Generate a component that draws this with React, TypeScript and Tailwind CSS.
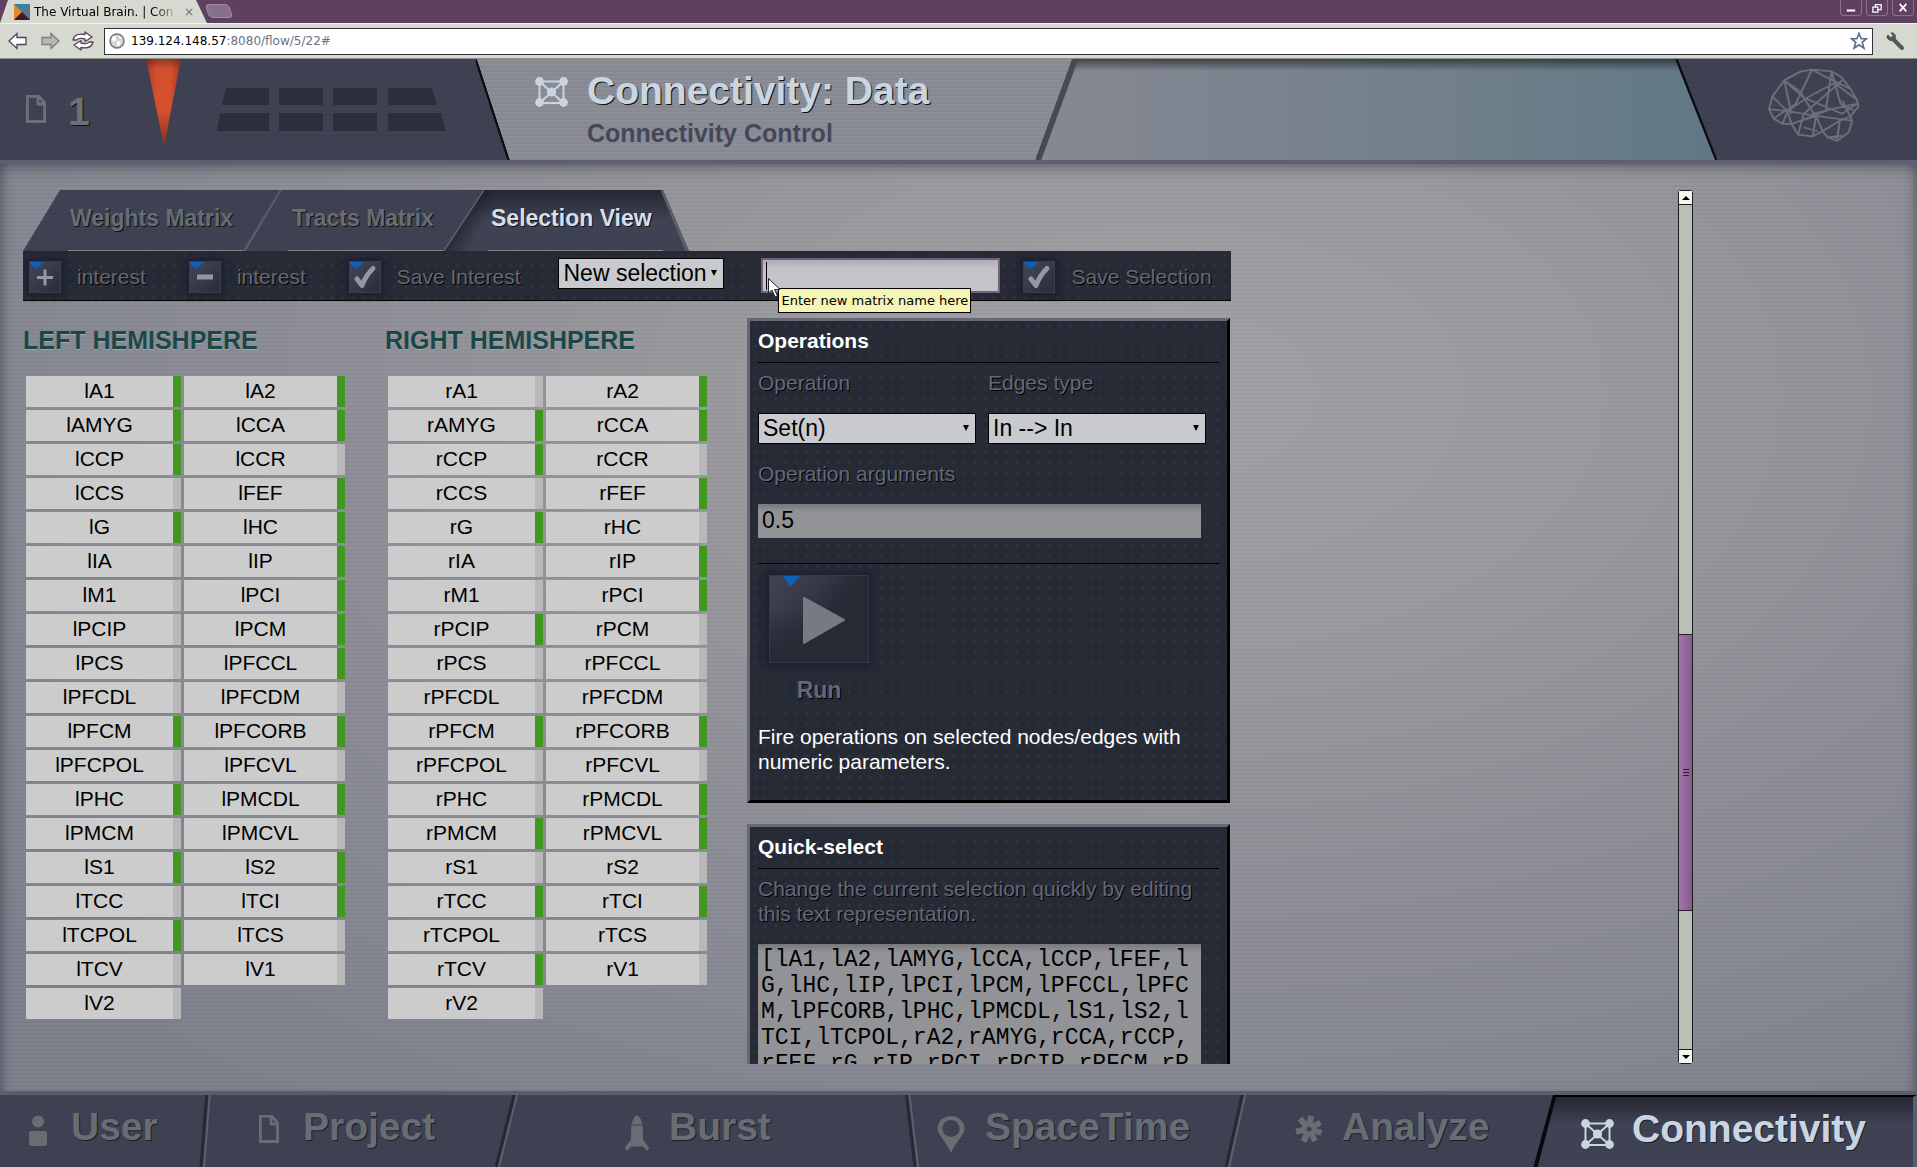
import React from "react";

const SANS = "font-['Liberation_Sans',Arial,sans-serif]";
const STRIPES =
  "bg-[repeating-linear-gradient(0deg,rgba(0,0,0,0.035)_0px,rgba(0,0,0,0.035)_2px,transparent_2px,transparent_4px)]";
const DOTS =
  "bg-[#262a35] bg-[radial-gradient(circle_at_5px_5px,#2f3440_0px,#2f3440_1px,transparent_2px),radial-gradient(circle_at_15px_5px,#2f3440_0px,#2f3440_1px,transparent_2px),radial-gradient(circle_at_5px_15px,#2f3440_0px,#2f3440_1px,transparent_2px),radial-gradient(circle_at_15px_15px,#2f3440_0px,#2f3440_1px,transparent_2px)] bg-[size:21px_21px]";

function Network({ className }: { className: string }) {
  return (
    <svg viewBox="0 0 34 30" className={className} fill="currentColor" stroke="currentColor" aria-hidden="true">
      <path d="M5 4.500H29V26H5ZM5 4.500L29 26M29 4.500L5 26" fill="none" strokeWidth="2" />
      <g stroke="none">
        <circle cx="5" cy="4.500" r="4.400" />
        <circle cx="29" cy="4.500" r="4.400" />
        <circle cx="5" cy="25.500" r="4.400" />
        <circle cx="29" cy="25.500" r="4.400" />
        <circle cx="17" cy="15" r="4.600" />
      </g>
    </svg>
  );
}

function PageIcon({ className }: { className: string }) {
  return (
    <svg viewBox="0 0 20 28" className={className} fill="none" stroke="currentColor" strokeWidth="2.800" aria-hidden="true">
      <path d="M1.400 1.400H13L18.600 8V26.500H1.400ZM12 2V9H18.500" />
    </svg>
  );
}

function UserIcon() {
  return (
    <svg viewBox="0 0 20 32" className="h-8 w-5" fill="currentColor" aria-hidden="true">
      <ellipse cx="10" cy="6.500" rx="6" ry="6" />
      <rect x="1" y="16" width="18" height="15" rx="2.500" />
    </svg>
  );
}

function RocketIcon() {
  return (
    <svg viewBox="0 0 24 36" className="h-9 w-6" fill="currentColor" aria-hidden="true">
      <path d="M12 0C9 2 7 6 6.600 9.500H17.400C17 6 15 2 12 0Z" />
      <path d="M6.200 10.500H17.800L18.200 25L23 31C24.500 34 23 36 21.500 35.500L18 31.500H6L2.500 35.500C1 36 -0.500 34 1 31L5.800 25Z" />
    </svg>
  );
}

function PinIcon() {
  return (
    <svg viewBox="0 0 28 38" className="h-[38px] w-7" fill="currentColor" fillRule="evenodd" aria-hidden="true">
      <path d="M14 1C6.500 1 0.500 6.500 0.500 13.500C0.500 20 9 26 14 38C19 26 27.500 20 27.500 13.500C27.500 6.500 21.500 1 14 1ZM14 5A8.700 8.500 0 1 1 14 22A8.700 8.500 0 1 1 14 5Z" />
    </svg>
  );
}

function CogIcon() {
  return (
    <svg viewBox="0 0 28 28" className="h-7 w-7" aria-hidden="true">
      <g stroke="currentColor" strokeWidth="6">
        <path d="M14 14L16 1M14 14L25.500 7.500M14 14L26.500 18M14 14L20 26M14 14L8.500 26.500M14 14L1 16.500M14 14L5 3.500" />
      </g>
      <circle cx="14" cy="14" r="7.500" fill="currentColor" />
      <circle cx="14" cy="14" r="2.500" fill="#3f4253" />
    </svg>
  );
}

function Brain() {
  return (
    <svg
      viewBox="1195 200 240 230"
      preserveAspectRatio="none"
      className="h-[77px] w-[98px]"
      fill="none"
      stroke="#6b7078"
      strokeWidth="5"
      strokeLinejoin="round"
      aria-hidden="true"
    >
      <path d="M1205 326L1213 288L1242 240L1281 214L1310 208L1358 213L1382 230L1404 265L1420 298L1424 318L1404 348L1408 362L1400 395L1371 421L1348 410L1336 392L1312 407L1276 402L1260 370L1238 370L1216 354Z" />
      <path d="M1205 326L1250 332L1320 346L1408 360M1213 288L1250 332L1238 370M1242 240L1290 292L1384 340L1420 310M1281 214L1242 240L1280 272L1320 350M1310 208L1270 310L1216 354M1310 208L1354 236L1404 265M1358 213L1344 330L1310 340M1358 213L1380 310L1412 330M1358 213L1366 248L1420 298M1366 248L1300 290L1250 332L1260 370M1384 240L1290 340L1276 402M1260 370L1320 346L1336 392M1320 346L1312 407M1336 392L1378 360L1404 348M1384 300L1404 348M1290 380L1325 392M1378 360L1371 421M1348 410L1385 405M1420 310L1360 325L1260 370M1242 240L1260 340" />
    </svg>
  );
}

function Edge({ d, w, className, stroke, width = 3 }: { d: string; w: string; className: string; stroke: string; width?: number }) {
  return (
    <svg viewBox={w} preserveAspectRatio="none" className={className} fill="none" aria-hidden="true">
      <path d={d} stroke={stroke} strokeWidth={width} />
    </svg>
  );
}

function BrowserChrome() {
  return (
    <div className="shrink-0 font-['DejaVu_Sans',sans-serif] text-[12px] text-black">
      <div className="flex h-[23px] items-start bg-[#5f4061]">
        <div className="flex h-[23px] w-[207px] items-center bg-[#d6d9cf] pl-3.5 [clip-path:polygon(8px_0,196px_0,100%_100%,0_100%)]">
          <svg viewBox="0 0 16 16" className="h-4 w-4" aria-hidden="true">
            <rect width="16" height="16" fill="#5c7684" />
            <path d="M0 0L8 8L0 16Z" fill="#e8842a" />
            <path d="M2 0H14L8 8Z" fill="#2d86a5" />
            <path d="M0 16L8 8L16 16Z" fill="#43192f" />
          </svg>
          <span className="ml-1 w-[144px] overflow-hidden whitespace-nowrap bg-linear-to-r from-black from-80% to-[#d6d9cf] bg-clip-text text-transparent">
            The Virtual Brain. | Con
          </span>
          <button className="ml-1.5 leading-none text-gray-500" aria-label="Close tab">×</button>
        </div>
        <div className="mt-1 h-3.5 w-6 rounded-sm border border-[#a58ba6] bg-[#87708a] [transform:skewX(18deg)]" />
        <div className="ml-auto flex gap-1 pr-[3px]">
          {["min", "max", "close"].map((k) => (
            <button
              key={k}
              aria-label={k}
              className="flex h-4 w-[22px] items-center justify-center rounded-b-sm border border-t-0 border-[#8d708f] text-white"
            >
              <svg viewBox="0 0 12 12" className="h-2.5 w-2.5" fill="none" stroke="currentColor" strokeWidth="1.500" aria-hidden="true">
                {k === "min" && <path d="M1 9H11" strokeWidth="2.500" />}
                {k === "max" && <path d="M1 5H7V11H1ZM4 5V2H11V8H7" />}
                {k === "close" && <path d="M2 1L10 10M10 1L2 10" strokeWidth="2" />}
              </svg>
            </button>
          ))}
        </div>
      </div>
      <div className="flex h-9 items-center gap-2.5 border-t border-b border-t-[#f0f2ec] border-b-[#8d9189] bg-[#d6d9cf] pl-2">
        <button aria-label="Back">
          <svg viewBox="0 0 20 18" className="h-[18px] w-5" fill="#fff" stroke="#55405a" strokeWidth="1.300" aria-hidden="true">
            <path d="M1 9L9 1.500V5.500H18V12.500H9V16.500Z" />
          </svg>
        </button>
        <button aria-label="Forward" className="ml-0.5">
          <svg viewBox="0 0 20 18" className="h-[18px] w-5" fill="#b5b7b2" stroke="#7d7f7c" strokeWidth="1.300" aria-hidden="true">
            <path d="M19 9L11 1.500V5.500H2V12.500H11V16.500Z" />
          </svg>
        </button>
        <button aria-label="Reload" className="ml-0.5">
          <svg viewBox="0 0 22 20" className="h-5 w-[22px]" fill="#fff" stroke="#55405a" strokeWidth="1.300" strokeLinejoin="round" aria-hidden="true">
            <path d="M1 9C2 4 7 2.500 13 3.500V1L20 6L13 10.500V8C9 7 6 7.500 5 9Z" />
            <path d="M21 11C20 16 15 17.500 9 16.500V19L2 14L9 9.500V12C13 13 16 12.500 17 11Z" />
          </svg>
        </button>
        <div className="flex h-[27px] flex-1 items-center border border-[#33313d] bg-white px-1">
          <svg viewBox="0 0 16 16" className="h-4 w-4" aria-hidden="true">
            <circle cx="8" cy="8" r="7" fill="#d4d4d4" stroke="#777" strokeWidth="1.500" />
            <path d="M3 4C6 2 8 3 7 6L5 9L3 7ZM8 8L12 9L10 13L8 12ZM9 2L13 5L11 6Z" fill="#fff" />
          </svg>
          <span className="ml-1.5">139.124.148.57</span>
          <span className="flex-1 text-gray-500">:8080/flow/5/22#</span>
          <svg viewBox="0 0 24 24" className="h-[18px] w-[18px]" fill="#fff" stroke="#5d6d8c" strokeWidth="2.200" aria-hidden="true">
            <path d="M12 2L14.800 9H22L16.300 13.700L18.500 21.500L12 17L5.500 21.500L7.700 13.700L2 9H9.200Z" />
          </svg>
        </div>
        <button aria-label="Settings" className="mr-3 ml-0.5">
          <svg viewBox="0 0 20 20" className="h-5 w-5" fill="none" stroke="#55585a" aria-hidden="true">
            <path d="M8 8L17 17" strokeWidth="4" strokeLinecap="round" />
            <path d="M3 4L6 7L8 4.500L6 2C9 1 12 5 9.500 8.500C7 11 1.500 9 2 5Z" fill="#55585a" strokeWidth="1" />
          </svg>
        </button>
      </div>
    </div>
  );
}

function Header() {
  return (
    <header className={`flex h-[101px] shrink-0 ${SANS} font-bold`}>
      <div className={`relative w-[510px] shrink-0 bg-[#3f4253] ${STRIPES} [clip-path:polygon(0_0,477px_0,100%_100%,0_100%)]`}>
        <div className="flex items-start gap-[22px] pt-[33px] pl-[26px] text-[#6b7178]">
          <PageIcon className="mt-[3px] h-7 w-5" />
          <span className="text-[39px] leading-10 [text-shadow:1px_1px_0_#111]">1</span>
        </div>
        <svg viewBox="146 59 302 90" className="absolute top-0 left-[146px] h-[90px] w-[302px]" aria-hidden="true">
          <defs>
            <linearGradient id="needle" x1="0" x2="1">
              <stop offset="0" stopColor="#a53a24" />
              <stop offset="0.3" stopColor="#d4502f" />
              <stop offset="0.7" stopColor="#d4502f" />
              <stop offset="1" stopColor="#a53a24" />
            </linearGradient>
            <linearGradient id="shade" x1="0" y1="0" x2="0" y2="1">
              <stop offset="0" stopColor="#000" stopOpacity="0.3" />
              <stop offset="0.12" stopColor="#000" stopOpacity="0" />
              <stop offset="0.6" stopColor="#000" stopOpacity="0" />
              <stop offset="1" stopColor="#000" stopOpacity="0.4" />
            </linearGradient>
          </defs>
          <path d="M146 59H181L164 146Z" fill="url(#needle)" />
          <path d="M146 59H181L164 146Z" fill="url(#shade)" />
          <path
            fill="#2c2e3c"
            d="M226 88H269V105H222ZM279 88H323V105H279ZM333 88H377V105H333ZM388 88H432L437 105H388ZM220 113H269V131H217ZM279 113H323V131H279ZM333 113H377V131H333ZM388 113H441L446 131H388Z"
          />
        </svg>
        <Edge w="0 0 34 101" d="M0 0L33 101" stroke="#0c0d12" className="absolute top-0 right-0 h-[101px] w-[34px]" />
      </div>
      <div className={`relative -ml-[33px] flex w-[595px] shrink-0 items-start bg-[#8b8d97] ${STRIPES} pt-3 pl-[57px] [clip-path:polygon(0_0,100%_0,558px_100%,33px_100%)]`}>
        <Network className="mt-1.5 h-[30px] w-[35px] text-[#c9d6e2]" />
        <div className="ml-[18px]">
          <h1 className="text-[39px] leading-10 whitespace-nowrap text-[#c9d6e2] [text-shadow:1px_1px_0_#111]">Connectivity: Data</h1>
          <p className="mt-2 text-[25px] leading-7 text-[#454659]">Connectivity Control</p>
        </div>
      </div>
      <div className={`relative -ml-[37px] min-w-0 flex-1 [clip-path:polygon(37px_0,calc(100%-40px)_0,100%_100%,0_100%)]`}>
        <div className="h-full bg-linear-to-r from-[#868893] via-[#71808a] via-60% to-[#607886]" />
        <div className="absolute inset-x-0 top-0 h-3 bg-linear-to-b from-black/50 to-transparent" />
        <Edge w="0 0 42 101" d="M39 0L2 101" stroke="#484a50" width={8} className="absolute top-0 left-0 h-[101px] w-[42px]" />
      </div>
      <div className={`relative -ml-10 w-[242px] shrink-0 bg-[#3f4253] ${STRIPES} [clip-path:polygon(0_0,100%_0,100%_100%,40px_100%)]`}>
        <div className="flex justify-end pt-2 pr-[54px]">
          <Brain />
        </div>
        <Edge w="0 0 42 101" d="M1 0L41 101" stroke="#0c0d12" className="absolute top-0 left-0 h-[101px] w-[42px]" />
      </div>
    </header>
  );
}

function ToolButton({ icon, label }: { icon: "plus" | "minus" | "check"; label: string }) {
  return (
    <button className="flex h-8 shrink-0 items-center gap-4 whitespace-nowrap text-[21px] leading-[25px] text-[#656876] [text-shadow:1px_1px_0_#000]">
      <svg viewBox="0 0 32 32" className="h-8 w-8 shadow-[0_0_6px_3px_rgba(28,28,44,0.8)]" aria-hidden="true">
        <defs>
          <linearGradient id="tile" x1="0" y1="0" x2="1" y2="1">
            <stop offset="0" stopColor="#454857" />
            <stop offset="1" stopColor="#282c38" />
          </linearGradient>
        </defs>
        <rect x="0.500" y="0.500" width="31" height="31" fill="url(#tile)" stroke="#3a3d4a" />
        <path d="M0 1H15L7.500 8Z" fill="#0d62b8" />
        <g fill="none" stroke="#9496a3" strokeLinecap="round">
          {icon === "plus" && <path d="M8 16.500H24M16 8.500V24.500" strokeWidth="3" strokeLinecap="butt" />}
          {icon === "minus" && <path d="M8 16H24" strokeWidth="5" strokeLinecap="butt" />}
          {icon === "check" && <path d="M8 18L13 24.500Q17 14 24 7.500" strokeWidth="5" strokeLinejoin="round" />}
        </g>
      </svg>
      <span className="pb-0.5">{label}</span>
    </button>
  );
}

function Select({ label, value, className }: { label: string; value: string; className: string }) {
  return (
    <span className={`relative block h-[31px] ${className}`}>
      <select
        aria-label={label}
        className="block h-full w-full appearance-none border border-black bg-[#c9cacd] pl-1 text-[23px] leading-[27px] text-black outline-none"
      >
        <option>{value}</option>
      </select>
      <svg viewBox="0 0 8 6" className="pointer-events-none absolute top-3 right-[6px] h-1.5 w-2" aria-hidden="true">
        <path d="M1 0H7L4 6Z" />
      </svg>
    </span>
  );
}

function Tabs() {
  const text = "text-[23px] leading-[26px] font-bold whitespace-nowrap text-[#686c73] [text-shadow:1px_1px_0_#111]";
  return (
    <nav className="flex h-[61px]" aria-label="Views">
      <a href="#weights" className={`relative flex w-[257px] bg-[#3f4253] ${STRIPES} pt-[15px] pl-[47px] ${text} [clip-path:polygon(37px_0,100%_0,220px_100%,0_100%)]`}>
        Weights Matrix
        <span className="absolute bottom-0 left-[45px] h-px w-[175px] bg-[#85878f]" />
      </a>
      <a href="#tracts" className={`relative -ml-[37px] flex w-60 bg-[#3f4253] ${STRIPES} pt-[15px] pl-[49px] ${text} [clip-path:polygon(37px_0,100%_0,200px_100%,0_100%)]`}>
        <Edge w="0 0 38 61" d="M37 0L1 61" stroke="#5b5e6c" className="absolute top-0 left-0 h-[61px] w-[38px]" />
        Tracts Matrix
        <span className="absolute bottom-0 left-[45px] h-px w-[155px] bg-[#85878f]" />
      </a>
      <a href="#selection" className={`relative -ml-10 flex w-[246px] bg-linear-to-b from-[#262833] to-[#3f4253] to-50% pt-[15px] pl-[48px] ${text} text-[#d5dfea]! [clip-path:polygon(40px_0,220px_0,100%_100%,0_100%)]`}>
        <svg viewBox="0 0 60 61" className="absolute top-0 left-0 h-[61px] w-[60px]" aria-hidden="true">
          <defs>
            <linearGradient id="fold" x1="0" y1="0" x2="1" y2="0.6">
              <stop offset="0.35" stopColor="#1b1d27" stopOpacity="0.9" />
              <stop offset="0.75" stopColor="#1b1d27" stopOpacity="0" />
            </linearGradient>
          </defs>
          <path d="M40 0H60L24 61H0Z" fill="url(#fold)" />
        </svg>
        <Edge w="0 0 41 61" d="M40 0L0 61" stroke="#5b5e6c" className="absolute top-0 left-0 h-[61px] w-[41px]" />
        <Edge w="0 0 28 61" d="M1 0L26 61" stroke="#5b5e6c" className="absolute top-0 right-0 h-[61px] w-7" />
        <span className="relative">Selection View</span>
        <span className="absolute bottom-0 left-[45px] h-px w-[175px] bg-[#85878f]" />
      </a>
    </nav>
  );
}

function Toolbar() {
  return (
    <div className={`relative flex h-[50px] w-[1208px] items-start gap-[38px] border-b border-black ${DOTS} pt-[7px] pl-1.5 ${SANS}`}>
      <div className="flex gap-[43px] pt-[3px]">
        <ToolButton icon="plus" label="interest" />
        <ToolButton icon="minus" label="interest" />
        <ToolButton icon="check" label="Save Interest" />
      </div>
      <Select label="Selection" value="New selection" className="w-[166px]" />
      <div className="relative -ml-px">
        <input
          aria-label="New matrix name"
          className="block h-[35px] w-[239px] border-2 border-[#75607f] bg-linear-to-b from-[#acadb1] to-[#c3c4c7] to-30% px-1 text-[23px] outline-none"
        />
        <span className="absolute top-1 left-[5px] h-7 w-px bg-black" />
        <div
          role="tooltip"
          className="absolute top-[30px] left-[17px] z-10 h-[25px] border border-black bg-[#f5f5b5] px-0.5 font-['DejaVu_Sans',sans-serif] text-[13px] leading-[23px] whitespace-nowrap text-black"
        >
          Enter new matrix name here
        </div>
        <svg viewBox="0 0 13 20" className="absolute top-5 left-[7px] z-20 h-5 w-[13px]" aria-hidden="true">
          <path d="M0.500 0.500V15L4 12L7 19L9.500 18L6.500 11.500H12Z" fill="#fff" stroke="#222" />
        </svg>
      </div>
      <div className="-ml-[15px] pt-[3px]">
        <ToolButton icon="check" label="Save Selection" />
      </div>
    </div>
  );
}

const NODES = [
  "A1", "A2", "AMYG", "CCA", "CCP", "CCR", "CCS", "FEF", "G", "HC", "IA", "IP", "M1", "PCI", "PCIP", "PCM", "PCS",
  "PFCCL", "PFCDL", "PFCDM", "PFCM", "PFCORB", "PFCPOL", "PFCVL", "PHC", "PMCDL", "PMCM", "PMCVL", "S1", "S2", "TCC",
  "TCI", "TCPOL", "TCS", "TCV", "V1", "V2",
];
const LEFT_ON = ["A1", "A2", "AMYG", "CCA", "CCP", "FEF", "G", "HC", "IP", "PCI", "PCM", "PFCCL", "PFCM", "PFCORB", "PHC", "PMCDL", "S1", "S2", "TCI", "TCPOL"];
const RIGHT_ON = ["A2", "AMYG", "CCA", "CCP", "FEF", "G", "IP", "PCI", "PCIP", "PFCM", "PFCORB", "PMCDL", "PMCM", "PMCVL", "TCC", "TCI", "TCV"];

function Hemisphere({ title, prefix, on }: { title: string; prefix: string; on: string[] }) {
  return (
    <section className="pt-6">
      <h2 className="text-[25px] leading-[30px] font-bold whitespace-nowrap text-[#1b4846] [text-shadow:0_1px_0_#a5a6b0]">{title}</h2>
      <div className="mt-[21px] ml-[3px] grid grid-cols-[155px_161px] gap-[3px]">
        {NODES.map((n) => (
          <button
            key={n}
            aria-pressed={on.includes(n)}
            className={`h-[31px] border-r-8 bg-[#cccccc] pb-0.5 text-center text-[21px] leading-[29px] text-black ${
              on.includes(n) ? "border-[#419720]" : "border-[#b8b8b8]"
            }`}
          >
            {prefix + n}
          </button>
        ))}
      </div>
    </section>
  );
}

const PANEL = `border-[3px] border-t-[#666975] border-l-[#666975] border-r-black border-b-black px-2 ${DOTS} text-[21px] leading-[25px]`;
const MUTED = "text-[#656876] [text-shadow:1px_1px_0_#000]";
const FIELD = "bg-[#929397] bg-linear-to-b from-[#77787c] to-[#929397] to-[8px] text-black outline-none";

function Operations() {
  return (
    <section className={`mt-[17px] pt-[7px] pb-[26px] ${PANEL}`}>
      <h3 className="border-b border-black pb-[9px] font-bold text-white">Operations</h3>
      <div className="mt-[7px] flex gap-3">
        <div>
          <div className={MUTED}>Operation</div>
          <Select label="Operation" value="Set(n)" className="mt-[18px] w-[218px]" />
        </div>
        <div>
          <div className={MUTED}>Edges type</div>
          <Select label="Edges type" value="In --> In" className="mt-[18px] w-[218px]" />
        </div>
      </div>
      <label htmlFor="op-args" className={`mt-[17px] block ${MUTED}`}>Operation arguments</label>
      <input id="op-args" defaultValue="0.5" className={`mt-[18px] block h-[34px] w-[443px] px-1 pb-0.5 text-[23px] leading-[30px] ${FIELD}`} />
      <hr className="mt-[25px] border-black" />
      <button className={`mt-[11px] ml-[11px] block w-[100px] text-center text-[23px] leading-7 font-bold ${MUTED}`}>
        <svg viewBox="0 0 100 88" className="mb-[13px] block h-[88px] w-[100px] shadow-[0_0_6px_3px_rgba(28,28,44,0.8)]" aria-hidden="true">
          <defs>
            <linearGradient id="run" x1="0" y1="0.2" x2="0.5" y2="0.6">
              <stop offset="0" stopColor="#3f414f" />
              <stop offset="0.5" stopColor="#363845" />
              <stop offset="1" stopColor="#262a35" />
            </linearGradient>
            <linearGradient id="runfade" x1="0" y1="0" x2="0" y2="1">
              <stop offset="0.4" stopColor="#262a35" stopOpacity="0" />
              <stop offset="0.9" stopColor="#262a35" />
            </linearGradient>
          </defs>
          <rect width="100" height="88" fill="url(#run)" />
          <rect x="0.500" y="0.500" width="99" height="87" fill="url(#runfade)" stroke="#343744" />
          <path d="M14 1H31L21 12Z" fill="#0b63b9" />
          <path d="M35 23L75 45L35 68Z" fill="#777985" stroke="#777985" strokeWidth="2" strokeLinejoin="round" />
        </svg>
        Run
      </button>
      <p className="mt-5 text-white">Fire operations on selected nodes/edges with numeric parameters.</p>
    </section>
  );
}

const QUICK =
  "[lA1,lA2,lAMYG,lCCA,lCCP,lFEF,lG,lHC,lIP,lPCI,lPCM,lPFCCL,lPFCM,lPFCORB,lPHC,lPMCDL,lS1,lS2,lTCI,lTCPOL,rA2,rAMYG,rCCA,rCCP,rFEF,rG,rIP,rPCI,rPCIP,rPFCM,rPFCORB,rPMCDL,rPMCM,rPMCVL,rTCC,rTCI,rTCV]";

function QuickSelect() {
  return (
    <section className={`mt-[21px] pt-[7px] pb-6 ${PANEL}`}>
      <h3 className="border-b border-black pb-[9px] font-bold text-white">Quick-select</h3>
      <label htmlFor="quick" className={`mt-[7px] block ${MUTED}`}>
        Change the current selection quickly by editing this text representation.
      </label>
      <textarea
        id="quick"
        defaultValue={QUICK}
        className={`mt-[18px] block h-[190px] w-[443px] resize-none overflow-hidden px-[3px] pt-[3px] font-['Liberation_Mono','Courier_New',monospace] text-[23px] leading-[26px] break-all ${FIELD}`}
      />
    </section>
  );
}

function ScrollBar() {
  return (
    <div className="flex w-[15px] shrink-0 flex-col rounded-[3px] border border-[#1c1c1c] bg-[#bbc0b6]" aria-hidden="true">
      <div className="flex h-3.5 shrink-0 items-center justify-center border-b border-[#1c1c1c] bg-[#f4f8ec]">
        <svg viewBox="0 0 8 4" className="h-1 w-2"><path d="M0 4L4 0L8 4Z" /></svg>
      </div>
      <div className="flex-[430]" />
      <div className="flex flex-[276] flex-col items-center justify-center gap-0.5 border-y border-[#2b1c2c] bg-linear-to-r from-[#a377aa] to-[#865a8e]">
        <span className="h-px w-1.5 bg-[#2b1c2c]" />
        <span className="h-px w-1.5 bg-[#2b1c2c]" />
        <span className="h-px w-1.5 bg-[#2b1c2c]" />
      </div>
      <div className="flex-[138]" />
      <div className="flex h-3.5 shrink-0 items-center justify-center border-t border-[#1c1c1c] bg-[#f4f8ec]">
        <svg viewBox="0 0 8 4" className="h-1 w-2"><path d="M0 0H8L4 4Z" /></svg>
      </div>
    </div>
  );
}

function NavItem({ label, icon, box, edge }: { label: string; icon: React.ReactNode; box: string; edge?: React.ReactNode }) {
  return (
    <a href={`#${label.toLowerCase()}`} className={`relative flex grow items-start ${box}`}>
      {edge}
      <span className="mt-5 block">{icon}</span>
      <span className="mt-3 text-[39px] leading-10 whitespace-nowrap [text-shadow:1px_1px_0_#1c1e28]">{label}</span>
    </a>
  );
}

function Slant({ d }: { d: string }) {
  return (
    <svg viewBox="0 0 24 76" className="absolute -top-1 -left-5 h-[76px] w-6" fill="none" aria-hidden="true">
      <path d={d} stroke="#5c5f6e" strokeWidth="2" transform="translate(3 0)" />
      <path d={d} stroke="#262834" strokeWidth="3" />
    </svg>
  );
}

function BottomNav() {
  return (
    <nav className={`flex h-[76px] shrink-0 overflow-hidden border-t-4 border-[#5a5d6e] bg-[#3f4253] ${STRIPES} ${SANS} font-bold text-[#686d73]`} aria-label="Sections">
      <NavItem label="User" icon={<UserIcon />} box="basis-[207px] gap-[23px] pl-[28px]" />
      <NavItem label="Project" icon={<PageIcon className="h-7 w-5" />} box="basis-[308px] gap-[24px] pl-[52px]" edge={<Slant d="M20 0L14 76" />} />
      <NavItem label="Burst" icon={<RocketIcon />} box="basis-[390px] gap-[20px] pl-[110px]" edge={<Slant d="M20 0L1 76" />} />
      <NavItem
        label="SpaceTime"
        icon={<PinIcon />}
        box="basis-[338px] gap-[20px] pl-[32px]"
        edge={
          <svg viewBox="0 0 16 76" className="absolute -top-1 left-0 h-[76px] w-4" fill="none" aria-hidden="true">
            <path d="M4 0L13 76" stroke="#5c5f6e" strokeWidth="2" />
            <path d="M1 0L10 76" stroke="#262834" strokeWidth="3" />
          </svg>
        }
      />
      <NavItem label="Analyze" icon={<CogIcon />} box="basis-[310px] gap-[19px] pl-[52px]" edge={<Slant d="M20 0L3 76" />} />
      <div className="relative -ml-5 flex grow basis-[384px] bg-[#3f4253] bg-linear-to-b from-[#23242e] to-[#3f4253] to-40% text-[#c9d6e2] [clip-path:polygon(20px_0,100%_0,100%_100%,0_100%)]">
        <NavItem
          label="Connectivity"
          icon={<Network className="mt-0.5 h-[30px] w-[35px]" />}
          box="border-t-2 border-r-4 border-t-black border-r-[#5a5d6e] gap-[17px] pl-[47px]"
          edge={
            <svg viewBox="0 0 24 72" className="absolute top-0 left-0 h-[72px] w-6" fill="none" aria-hidden="true">
              <path d="M21 0L2 72" stroke="#08090d" strokeWidth="4" />
            </svg>
          }
        />
      </div>
    </nav>
  );
}

export default function App() {
  return (
    <div className={`flex h-screen flex-col overflow-hidden ${SANS}`}>
      <BrowserChrome />
      <Header />
      <main className="min-h-0 flex-1 border-t-4 border-[#5c6070] bg-[radial-gradient(ellipse_at_61%_25%,#a3a2a6_0%,#9c9b9f_25%,#8f8f98_52%,#7e838e_90%)]">
        <div className={`flex h-full pt-[26px] pb-[27px] pl-[23px] shadow-[inset_0_14px_14px_-12px_rgba(50,50,60,0.6),inset_12px_0_12px_-10px_rgba(50,50,60,0.55),inset_-12px_0_12px_-10px_rgba(50,50,60,0.55)] ${STRIPES}`}>
          <div className="min-w-0 flex-1 overflow-hidden">
            <Tabs />
            <Toolbar />
            <div className="grid grid-cols-[362px_362px_483px]">
              <Hemisphere title="LEFT HEMISHPERE" prefix="l" on={LEFT_ON} />
              <Hemisphere title="RIGHT HEMISHPERE" prefix="r" on={RIGHT_ON} />
              <div>
                <Operations />
                <QuickSelect />
              </div>
            </div>
          </div>
          <ScrollBar />
          <div className="w-[224px] shrink-0" />
        </div>
      </main>
      <BottomNav />
    </div>
  );
}
